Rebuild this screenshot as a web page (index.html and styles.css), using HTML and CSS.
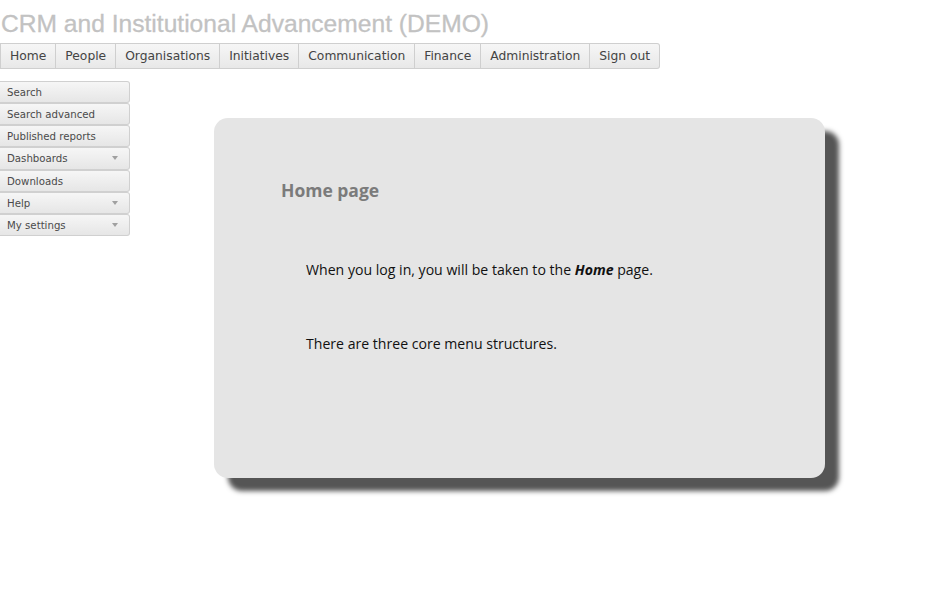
FILE: index.html
```html
<!DOCTYPE html>
<html>
<head>
<meta charset="utf-8">
<link rel="stylesheet" href="styles.css">
</head>
<body>
<h1 class="title">CRM and Institutional Advancement (DEMO)</h1>
<nav class="topnav">
  <a class="tab">Home</a>
  <a class="tab">People</a>
  <a class="tab">Organisations</a>
  <a class="tab">Initiatives</a>
  <a class="tab">Communication</a>
  <a class="tab">Finance</a>
  <a class="tab">Administration</a>
  <a class="tab last">Sign out</a>
</nav>
<div class="main">
  <ul class="side">
    <li class="sitem">Search</li>
    <li class="sitem">Search advanced</li>
    <li class="sitem">Published reports</li>
    <li class="sitem drop">Dashboards</li>
    <li class="sitem">Downloads</li>
    <li class="sitem drop">Help</li>
    <li class="sitem drop">My settings</li>
  </ul>
  <div class="card">
    <h2 class="card-title">Home page</h2>
    <p class="para first">When you log in, you will be taken to the <b><i>Home</i></b> page.</p>
    <p class="para">There are three core menu structures.</p>
  </div>
</div>
</body>
</html>
```
FILE: styles.css
```css
html, body { margin: 0; padding: 0; background: #fff; }
body { width: 945px; height: 605px; overflow: hidden; }
.title {
  margin: 0;
  padding: 11px 0 0 1px;
  height: 35px;
  box-sizing: border-box;
  font-family: "Liberation Sans", Arial, sans-serif;
  font-weight: normal;
  font-size: 24.6px;
  line-height: 26px;
  color: #c2c2c2;
  -webkit-text-stroke: 0.3px #c2c2c2;
  white-space: nowrap;
}
.topnav {
  display: flex;
  margin-top: 8px;
  height: 26px;
}
.tab {
  display: block;
  box-sizing: border-box;
  height: 26px;
  padding: 0 9px 0 9px;
  border: 1px solid #cfcfcf;
  border-left: none;
  background: linear-gradient(#f6f6f6, #e8e8e8);
  font-family: "DejaVu Sans", Verdana, sans-serif;
  font-size: 12.3px;
  line-height: 25px;
  color: #444;
}
.tab:first-child { border-left: 1px solid #cfcfcf; }
.tab.last { border-radius: 0 3px 3px 0; }
.main { display: flex; align-items: flex-start; }
.side {
  list-style: none;
  margin: 12px 0 0 0;
  padding: 0;
  width: 130px;
}
.sitem {
  position: relative;
  box-sizing: border-box;
  height: 22.15px;
  padding-left: 7px;
  border: 1px solid #d0d0d0;
  border-left: none;
  border-radius: 0 3px 3px 0;
  background: linear-gradient(#f6f6f6, #e6e6e6);
  font-family: "DejaVu Sans", Verdana, sans-serif;
  font-size: 10.2px;
  line-height: 21px;
  color: #4a4a4a;
}
.sitem.drop::after {
  content: "";
  position: absolute;
  right: 11px;
  top: 8px;
  border-left: 3.5px solid transparent;
  border-right: 3.5px solid transparent;
  border-top: 4px solid #a0a0a0;
}
.card {
  margin: 49px 0 0 84px;
  width: 611px;
  height: 360px;
  box-sizing: border-box;
  padding: 60px 0 0 67px;
  background: #e5e5e5;
  border-radius: 14px;
  box-shadow: 14px 13px 5px #555;
}
.card-title {
  margin: 0;
  font-family: "Open Sans", "Noto Sans", sans-serif;
  font-weight: bold;
  font-size: 17.5px;
  line-height: 24px;
  color: #7b7b7b;
}
.para {
  margin: 0 0 0 25px;
  font-family: "Open Sans", "Noto Sans", sans-serif;
  font-size: 14.1px;
  line-height: 20px;
  color: #111;
}
.para.first { margin-top: 58px; margin-bottom: 54px; }
```
